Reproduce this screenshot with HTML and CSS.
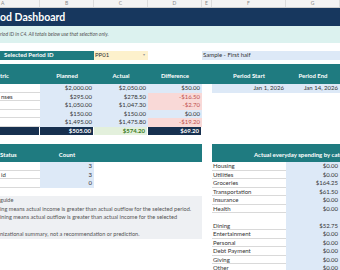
FILE: index.html
```html
<!DOCTYPE html>
<html lang="en">
<head>
    <meta charset="UTF-8" />
    <meta name="viewport" content="width=device-width, initial-scale=1" />
    <title>Period Dashboard</title>
    <link rel="stylesheet" href="styles.css">
</head>
<body>
    <div class="colbar">
        <div>A</div><div>B</div><div>C</div><div>D</div><div>E</div><div>F</div><div>G</div>
    </div>

    <div class="row title"><div class="all">od Dashboard</div></div>
    <div class="row note"><div class="all">riod ID in C4. All totals below use that selection only.</div></div>
    <div class="row gap-8"></div>

    <div class="row">
        <div class="span-2 sel-label">Selected Period ID</div>
        <div class="pick">PP01<span class="arrow">&#9662;</span></div>
        <div></div>
        <div class="span-3 sample">Sample - First half</div>
    </div>
    <div class="row gap-4"></div>

    <div class="row head">
        <div class="left">tric</div>
        <div>Planned</div>
        <div>Actual</div>
        <div>Difference</div>
        <div></div>
        <div>Period Start</div>
        <div>Period End</div>
    </div>

    <div class="row">
        <div class="label"></div>
        <div class="num blue">$2,000.00</div>
        <div class="num blue">$2,050.00</div>
        <div class="num blue">$50.00</div>
        <div></div>
        <div class="num blue">Jan 1, 2026</div>
        <div class="num blue">Jan 14, 2026</div>
    </div>
    <div class="row">
        <div class="label">nses</div>
        <div class="num blue">$295.00</div>
        <div class="num blue">$278.50</div>
        <div class="num pink">-$16.50</div>
    </div>
    <div class="row">
        <div class="label"></div>
        <div class="num blue">$1,050.00</div>
        <div class="num blue">$1,047.30</div>
        <div class="num pink">-$2.70</div>
    </div>
    <div class="row">
        <div class="label"></div>
        <div class="num blue">$150.00</div>
        <div class="num blue">$150.00</div>
        <div class="num blue">$0.00</div>
    </div>
    <div class="row">
        <div class="label"></div>
        <div class="num blue">$1,495.00</div>
        <div class="num blue">$1,475.80</div>
        <div class="num pink">-$19.20</div>
    </div>
    <div class="row total">
        <div class="navy"></div>
        <div class="num navy">$505.00</div>
        <div class="num green">$574.20</div>
        <div class="num navy">$69.20</div>
    </div>
    <div class="row gap-9"></div>

    <div class="row head sub">
        <div class="left">Status</div>
        <div>Count</div>
        <div></div>
        <div></div>
        <div class="blank"></div>
        <div class="span-2 wide">Actual everyday spending by category</div>
    </div>

    <div class="row">
        <div class="label"></div><div class="num blue">3</div><div></div><div></div><div></div>
        <div class="label">Housing</div><div class="num blue">$0.00</div>
    </div>
    <div class="row">
        <div class="label">id</div><div class="num blue">3</div><div></div><div></div><div></div>
        <div class="label">Utilities</div><div class="num blue">$0.00</div>
    </div>
    <div class="row">
        <div class="label"></div><div class="num blue">0</div><div></div><div></div><div></div>
        <div class="label">Groceries</div><div class="num blue">$164.25</div>
    </div>
    <div class="row">
        <div class="span-4"></div><div></div>
        <div class="label">Transportation</div><div class="num blue">$61.50</div>
    </div>
    <div class="row">
        <div class="span-4 guide">guide</div><div></div>
        <div class="label">Insurance</div><div class="num blue">$0.00</div>
    </div>
    <div class="row">
        <div class="span-4 guide">ing means actual income is greater than actual outflow for the selected period.</div><div></div>
        <div class="label">Health</div><div class="num blue">$0.00</div>
    </div>
    <div class="row">
        <div class="span-4 guide">ining means actual outflow is greater than actual income for the selected</div><div></div>
        <div class="label plain"></div><div class="num blue"></div>
    </div>
    <div class="row">
        <div class="span-4 guide"></div><div></div>
        <div class="label">Dining</div><div class="num blue">$52.75</div>
    </div>
    <div class="row">
        <div class="span-4 guide">nizational summary, not a recommendation or prediction.</div><div></div>
        <div class="label">Entertainment</div><div class="num blue">$0.00</div>
    </div>
    <div class="row">
        <div class="span-4"></div><div></div>
        <div class="label">Personal</div><div class="num blue">$0.00</div>
    </div>
    <div class="row">
        <div class="span-4"></div><div></div>
        <div class="label">Debt Payment</div><div class="num blue">$0.00</div>
    </div>
    <div class="row">
        <div class="span-4"></div><div></div>
        <div class="label">Giving</div><div class="num blue">$0.00</div>
    </div>
    <div class="row">
        <div class="span-4"></div><div></div>
        <div class="label">Other</div><div class="num blue">$0.00</div>
    </div>
</body>
</html>
```

FILE: styles.css
```css
body {
    margin: 0;
    font-family: Lato, "Open Sans", sans-serif;
    font-size: 6px;
    color: #333;
    overflow: hidden;
    background: #fff;
}
.colbar, .row {
    display: grid;
    grid-template-columns: 40px 54px 54px 54px 10px 74px 54px;
}
.colbar {
    height: 8px;
    background: #f3f3f3;
    border-bottom: 1px solid #cfcfcf;
    box-sizing: border-box;
    font-size: 5px;
    color: #888;
}
.colbar div {
    text-align: center;
    line-height: 7px;
    border-right: 1px solid #dcdcdc;
}
.colbar div:first-child {
    text-align: left;
    padding-left: 1px;
}
.row {
    height: 8.5px;
    line-height: 8.5px;
}
.row > div {
    white-space: nowrap;
    overflow: hidden;
    box-sizing: border-box;
}
.all {
    grid-column: 1 / -1;
}
.span-2 { grid-column: span 2; }
.span-3 { grid-column: span 3; }
.span-4 { grid-column: span 4; }
.gap-4 { height: 4.5px; }
.gap-8 { height: 8px; }
.gap-9 { height: 9px; }

.title {
    height: 18px;
    line-height: 19px;
    background: #17375e;
    color: #fff;
    font-size: 10.5px;
    font-weight: 700;
}
.note {
    height: 17px;
    line-height: 17px;
    background: #dcf2ef;
    color: #555;
    font-style: italic;
    font-size: 5px;
}
.sel-label {
    background: #1f7b80;
    color: #fff;
    font-weight: 700;
    padding-left: 4px;
}
.pick {
    background: #fdf1cc;
    padding-left: 1px;
    position: relative;
}
.arrow {
    position: absolute;
    right: 3px;
    color: #999;
    font-size: 4px;
}
.sample {
    background: #dde9f7;
    padding-left: 1px;
}
.head {
    height: 20px;
    line-height: 12px;
    background: #1f7b80;
    color: #fff;
    font-weight: 700;
    align-items: end;
    padding-bottom: 2px;
    box-sizing: border-box;
}
.head > div {
    text-align: center;
}
.head .left {
    text-align: left;
}
.head.sub {
    height: 18px;
    background: linear-gradient(to right, #1f7b80 202px, #fff 202px, #fff 212px, #1f7b80 212px);
    padding-bottom: 1px;
}
.head .wide {
    text-align: left;
    padding-left: 42px;
}
.label {
    border-bottom: 1px solid #d9d9d9;
    padding-left: 1px;
}
.label.plain {
    border-bottom: none;
}
.num {
    text-align: right;
    padding-right: 2px;
}
.blue {
    background: #dde9f7;
}
.pink {
    background: #f9d9d7;
    color: #c0504d;
}
.total > div {
    border-right: 1px solid #fff;
}
.navy {
    background: #17304f;
    color: #fff;
    font-weight: 700;
}
.green {
    background: #e3f0dc;
    color: #3a7d22;
    font-weight: 700;
}
.guide {
    background: #eef0f3;
    color: #555;
    font-size: 5.6px;
}
```
